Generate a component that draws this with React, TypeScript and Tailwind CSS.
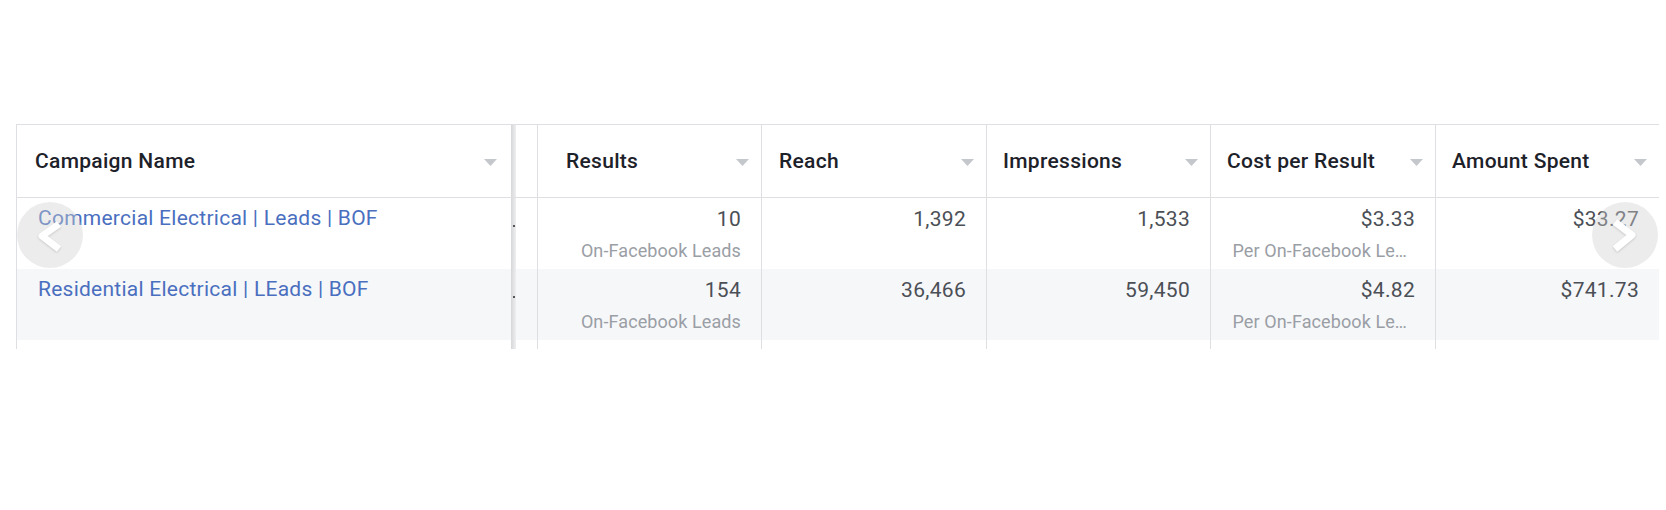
import React from "react";

type Col = { label: string; w: string; pl: string };

const cols: Col[] = [
  { label: "Results", w: "w-[224px]", pl: "pl-[28px]" },
  { label: "Reach", w: "w-[225px]", pl: "pl-[17px]" },
  { label: "Impressions", w: "w-[224px]", pl: "pl-[16px]" },
  { label: "Cost per Result", w: "w-[225px]", pl: "pl-[16px]" },
  { label: "Amount Spent", w: "w-[224px]", pl: "pl-[16px]" },
];

const rows = [
  {
    name: "Commercial Electrical | Leads | BOF",
    cells: [
      { v: "10", sub: "On-Facebook Leads" },
      { v: "1,392" },
      { v: "1,533" },
      { v: "$3.33", sub: "Per On-Facebook Le…", cut: true },
      { v: "$33.27" },
    ],
    bg: "bg-white",
  },
  {
    name: "Residential Electrical | LEads | BOF",
    cells: [
      { v: "154", sub: "On-Facebook Leads" },
      { v: "36,466" },
      { v: "59,450" },
      { v: "$4.82", sub: "Per On-Facebook Le…", cut: true },
      { v: "$741.73" },
    ],
    bg: "bg-[#f6f7f9]",
  },
];

const Caret = () => (
  <svg width="13" height="7" viewBox="0 0 13 7" className="shrink-0">
    <path d="M0 0h13L6.5 7z" fill="#c4c7cc" />
  </svg>
);

const Band = ({ dot }: { dot?: boolean }) => (
  <div className="w-[26px] h-full flex">
    <div className="w-[5px] h-full bg-gradient-to-r from-[#d6d7d9] to-[#efeff0] relative">
      {dot && <div className="absolute left-[2px] top-[27px] w-[2px] h-[2px] bg-[#555]" />}
    </div>
  </div>
);

const Chevron = ({ dir }: { dir: "left" | "right" }) => (
  <div className="w-[66px] h-[66px] rounded-full bg-[#d0d0d0]/40">
    <svg width="66" height="66" viewBox="0 0 66 66" className="drop-shadow-[0_1px_1px_rgba(0,0,0,0.15)]">
      <polyline
        points={dir === "left" ? "42,22 25,34 42,47" : "23,20 40,33 23,47"}
        fill="none"
        stroke="white"
        strokeWidth="7"
        strokeLinejoin="round"
      />
    </svg>
  </div>
);

export default function App() {
  return (
    <div className="relative w-[1666px] h-[510px] bg-white overflow-hidden pt-[124px] pl-[16px] font-['Roboto',sans-serif]">
      <div className="w-[1643px]">
        {/* HEADER */}
        <div className="flex h-[74px] border-y border-[#dddfe2]">
          <div className="w-[495px] border-l border-[#dddfe2] flex items-center justify-between pl-[18px] pr-[14px] pt-[2px]">
            <span className="text-[21px] font-medium tracking-[0.3px] text-[#1d2129]">Campaign Name</span>
            <Caret />
          </div>
          <Band />
          {cols.map((c) => (
            <div
              key={c.label}
              className={`${c.w} ${c.pl} border-l border-[#dddfe2] flex items-center justify-between pr-[12px] pt-[2px]`}
            >
              <span className="text-[21px] font-medium tracking-[0.3px] text-[#1d2129] whitespace-nowrap">
                {c.label}
              </span>
              <Caret />
            </div>
          ))}
        </div>

        {/* ROWS */}
        {rows.map((r, i) => (
          <div key={i} className={`flex h-[71px] ${r.bg}`}>
            <div className="w-[495px] border-l border-[#dddfe2] pl-[21px] pt-[8px]">
              <span className="text-[21px] leading-[25px] tracking-[0.25px] text-[#4a6fbf] whitespace-nowrap">
                {r.name}
              </span>
            </div>
            <Band dot />
            {r.cells.map((c, j) => (
              <div
                key={j}
                className={`${cols[j].w} border-l border-[#dddfe2] pr-[20px] pt-[9px] flex flex-col items-end`}
              >
                <span className="text-[21px] leading-[25px] tracking-[0.3px] text-[#4b4f56]">{c.v}</span>
                {c.sub && (
                  <span
                    className={`mt-[8px] ${c.cut ? "pr-[8px]" : "pr-0"} text-[18px] leading-[21px] tracking-[0.1px] text-[#9a9ea5] whitespace-nowrap`}
                  >
                    {c.sub}
                  </span>
                )}
              </div>
            ))}
          </div>
        ))}

        {/* cut-off remainder */}
        <div className="flex h-[9px]">
          <div className="w-[495px] border-l border-[#dddfe2]" />
          <Band />
          {cols.map((c) => (
            <div key={c.label} className={`${c.w} border-l border-[#dddfe2]`} />
          ))}
        </div>
      </div>

      <div className="absolute left-[17px] top-[202px]">
        <Chevron dir="left" />
      </div>
      <div className="absolute left-[1592px] top-[202px]">
        <Chevron dir="right" />
      </div>
    </div>
  );
}
